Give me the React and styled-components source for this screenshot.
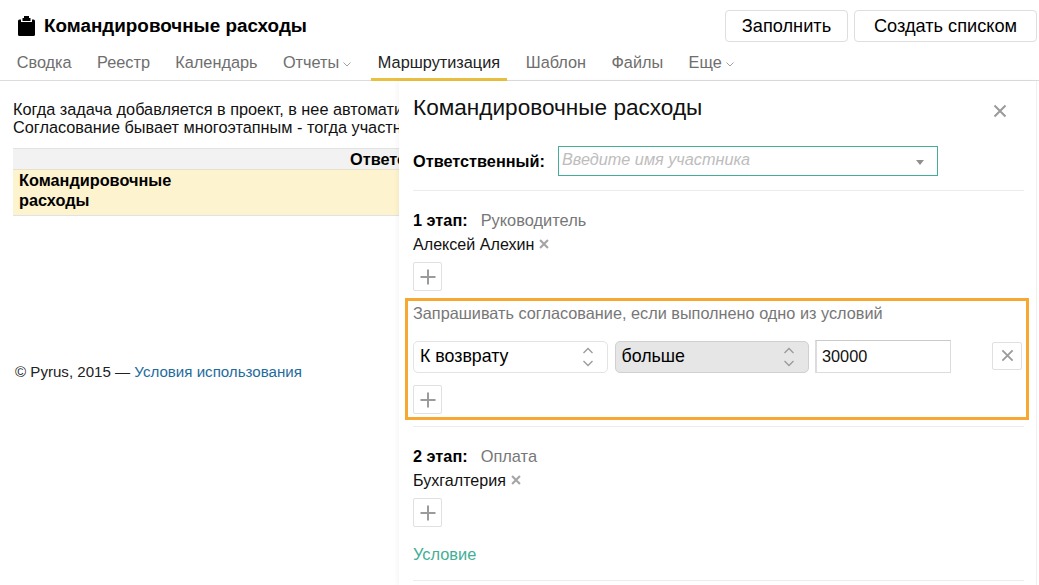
import React from "react";
import styled, { createGlobalStyle } from "styled-components";

const Global = createGlobalStyle`
  html, body { margin: 0; padding: 0; background: #fff; }
  body { font-family: "Liberation Sans", Arial, sans-serif; color: #000; overflow: hidden; }
  * { box-sizing: border-box; }
`;
const Page = styled.div`width: 1039px; height: 585px; overflow: hidden; display: flex; flex-direction: column;`;
const Header = styled.header`height: 81px; border-bottom: 1px solid #dcdcdc; display: flex; flex-direction: column; flex: none;`;
const TopRow = styled.div`height: 42px; padding: 10px 2px 0 18px; display: flex; justify-content: space-between;`;
const TitleWrap = styled.div`display: flex; align-items: center; gap: 9px; height: 32px;`;
const Title = styled.h1`margin: 0; font-size: 18.85px; font-weight: 700; line-height: 32px;`;
const TopButtons = styled.div`display: flex; gap: 6px;`;
const TopButton = styled.button`
  height: 32px; width: ${p => p.$w}px; padding: 0; background: #fff; border: 1px solid #dedede; border-radius: 4px;
  font: 18.2px "Liberation Sans", Arial, sans-serif; color: #000;
`;
const Tabs = styled.nav`display: flex; height: 38px; padding-left: 4px;`;
const Tab = styled.a`
  display: flex; align-items: center; gap: 3px; height: 39px; padding: 5px ${p => p.$pad ?? 12.7}px 0;
  font-size: 16.3px; color: ${p => (p.$active ? "#222" : "#6e6e6e")};
  border-bottom: 3px solid ${p => (p.$active ? "#e9c03f" : "transparent")};
  margin-left: ${p => p.$ml ?? 0}px;
`;
const Body = styled.main`flex: 1; display: flex; min-height: 0;`;
const Left = styled.section`width: 399px; flex: none; overflow: hidden; padding: 20px 0 0 13px;`;
const Intro = styled.p`margin: 0 0 12px; font-size: 16.3px; line-height: 17.5px; white-space: nowrap; color: #111;`;
const Table = styled.div`width: 700px; border: 1px solid #e2e2e2; border-width: 1px 0;`;
const TableHead = styled.div`height: 21px; background: #f2f2f2; padding-left: 337px; font-weight: 700; font-size: 16.3px; line-height: 20px; border-bottom: 1px solid #e6e0cc;`;
const TableRow = styled.div`height: 45px; background: #fdf3cf; padding: 1px 6px; font-weight: 700; font-size: 16.3px; line-height: 19.5px;`;
const Footer = styled.footer`margin-top: 147px; padding-left: 2px; font-size: 15.1px; color: #222;`;
const FootLink = styled.a`color: #1d6c9c;`;
const Panel = styled.aside`
  width: 638px; flex: none; padding: 0 12px 0 14px; border-right: 1px solid #f0f0f0;
  box-shadow: -2px 0 4px rgba(0,0,0,.04); background: #fff;
`;
const PanelHead = styled.div`height: 65px; padding: 14px 0 0; display: flex; justify-content: space-between;`;
const PanelTitle = styled.h2`margin: 0; font-size: 22.6px; font-weight: 400; line-height: 26px; color: #111;`;
const Close = styled.span`margin: 9px 17px 0 0; display: block; color: #9a9a9a; height: 14px;`;
const RespRow = styled.div`display: flex; align-items: center; height: 30px; gap: 13px;`;
const Bold = styled.b`font-size: 16.3px; font-weight: 700;`;
const PickerWrap = styled.div`
  width: 380px; height: 30px; border: 1px solid #45ad97; display: flex; align-items: center; justify-content: space-between; padding: 0 13px 0 3px;
`;
const Picker = styled.input`
  border: 0; outline: 0; padding: 0; flex: 1; font: italic 16.26px "Liberation Sans", Arial, sans-serif; margin-top: -3px;
  &::placeholder { color: #bdbdbd; opacity: 1; }
`;
const Caret = styled.i`width: 0; height: 0; border: 4.5px solid transparent; border-top: 5px solid #8f8f8f; border-bottom: 0; margin-top: 3px;`;
const Rule = styled.hr`margin: 0; border: 0; border-top: 1px solid #ececec; margin-top: ${p => p.$mt}px;`;
const StageHead = styled.div`display: flex; gap: 13px; font-size: 16.4px; line-height: 18px; margin-top: ${p => p.$mt ?? 20}px;`;
const StageName = styled.span`color: #777;`;
const Person = styled.div`display: flex; align-items: center; gap: 5px; font-size: 16.1px; line-height: 18px; margin-top: 6px; color: #111;`;
const Small = styled.span`display: flex; color: #a5a5a5;`;
const IconButton = styled.button`
  display: flex; align-items: center; justify-content: center; padding: 0; width: ${p => p.$w ?? 29}px; height: ${p => p.$h ?? 29}px;
  background: #fff; border: 1px solid #e0e0e0; border-radius: 2px; color: #9b9b9b; flex: none;
  margin-top: ${p => p.$mt ?? 0}px;
`;
const Condition = styled.div`
  margin: 7px -5px 0 -8px; height: 122px; padding: 3px 4px 0 5px; border: 3px solid #f6a833;
`;
const CondTitle = styled.div`font-size: 16.27px; line-height: 18px; color: #777;`;
const CondRow = styled.div`display: flex; align-items: center; margin-top: 18px; height: 33px;`;
const Select = styled.div`
  width: 195px; height: 32px; border: 1px solid ${p => (p.$on ? "#d0d0d0" : "#e3e3e3")}; border-radius: 5px; background: ${p => (p.$on ? "#e6e6e6" : "#fff")};
  display: flex; align-items: center; justify-content: space-between; padding: 0 12px 0 6px; font-size: 17.8px; margin-right: 7px;
`;
const NumberInput = styled.input`
  width: 136px; height: 33px; border: 1px solid #dcdcdc; border-top-color: #c9c9c9; border-left-width: 2px; padding: 0 5px; font: 16.3px "Liberation Sans", Arial, sans-serif; color: #111; outline: 0; margin-left: -1px;
`;
const Spacer = styled.div`width: 41px; flex: none;`;
const Green = styled.a`display: block; margin-top: 18px; color: #43ae96; font-size: 16.4px; line-height: 18px;`;

const Chev = () => <svg width="10" height="5" viewBox="0 0 10 5" fill="none" stroke="#a0a0a0" strokeWidth="1" style={{ marginTop: 3 }}><path d="M1.5 .5 5 4l3.5-3.5" /></svg>;
const UpDown = () => (
  <svg width="14" height="24" viewBox="0 0 14 24" fill="none" stroke="#9a9a9a" strokeWidth="1.3"><path d="M2.5 8 7 3.5 11.5 8" /><path d="M2.5 16 7 20.5 11.5 16" /></svg>
);
const Plus = () => <svg width="18" height="18" viewBox="0 0 18 18" stroke="#9b9b9b" strokeWidth="2"><path d="M9 1.5v15M1.5 9h15" /></svg>;
const Cross = ({ s = 14, w = 2 }) => <svg width={s} height={s} viewBox="0 0 14 14" stroke="currentColor" strokeWidth={w} style={{ display: "block" }}><path d="M1.5 1.5l11 11M12.5 1.5l-11 11" /></svg>;
const Clip = () => (
  <svg width="17" height="20" viewBox="0 0 17 20"><path fill="#000" d="M6 0h5v2h1.5v3h-8V2H6zM1.5 3.5H3V6h11V3.5h1.5A1.5 1.5 0 0 1 17 5v13.5a1.5 1.5 0 0 1-1.5 1.5h-14A1.5 1.5 0 0 1 0 18.5V5a1.5 1.5 0 0 1 1.5-1.5z" /></svg>
);

const CondClose = styled(IconButton)`margin-top: -2px;`;

export default function App() {
  return (
    <Page>
      <Global />
      <Header>
        <TopRow>
          <TitleWrap><Clip /><Title>Командировочные расходы</Title></TitleWrap>
          <TopButtons>
            <TopButton $w={123}>Заполнить</TopButton>
            <TopButton $w={183}>Создать списком</TopButton>
          </TopButtons>
        </TopRow>
        <Tabs>
          <Tab>Сводка</Tab>
          <Tab>Реестр</Tab>
          <Tab>Календарь</Tab>
          <Tab>Отчеты<Chev /></Tab>
          <Tab $active $pad={7} $ml={6}>Маршрутизация</Tab>
          <Tab $ml={6}>Шаблон</Tab>
          <Tab>Файлы</Tab>
          <Tab>Еще<Chev /></Tab>
        </Tabs>
      </Header>
      <Body>
        <Left>
          <Intro>
            Когда задача добавляется в проект, в нее автоматически добавляются участники.<br />
            Согласование бывает многоэтапным - тогда участники согласуют задачу по очереди.
          </Intro>
          <Table>
            <TableHead>Ответственный</TableHead>
            <TableRow>Командировочные<br />расходы</TableRow>
          </Table>
          <Footer>© Pyrus, 2015 — <FootLink>Условия использования</FootLink></Footer>
        </Left>
        <Panel>
          <PanelHead>
            <PanelTitle>Командировочные расходы</PanelTitle>
            <Close><Cross s={14} /></Close>
          </PanelHead>
          <RespRow>
            <Bold>Ответственный:</Bold>
            <PickerWrap>
              <Picker placeholder="Введите имя участника" />
              <Caret />
            </PickerWrap>
          </RespRow>
          <Rule $mt={14} />
          <StageHead><Bold>1 этап:</Bold><StageName>Руководитель</StageName></StageHead>
          <Person>Алексей Алехин<Small><Cross s={10} w={3} /></Small></Person>
          <IconButton $mt={9}><Plus /></IconButton>
          <Condition>
            <CondTitle>Запрашивать согласование, если выполнено одно из условий</CondTitle>
            <CondRow>
              <Select>К возврату<UpDown /></Select>
              <Select $on>больше<UpDown /></Select>
              <NumberInput defaultValue="30000" />
              <Spacer />
              <CondClose $w={30} $h={28}><Cross s={13} /></CondClose>
            </CondRow>
            <IconButton $mt={12}><Plus /></IconButton>
          </Condition>
          <Rule $mt={6} />
          <StageHead $mt={20}><Bold>2 этап:</Bold><StageName>Оплата</StageName></StageHead>
          <Person>Бухгалтерия<Small><Cross s={10} w={3} /></Small></Person>
          <IconButton $mt={9}><Plus /></IconButton>
          <Green>Условие</Green>
          <Rule $mt={17} />
        </Panel>
      </Body>
    </Page>
  );
}
